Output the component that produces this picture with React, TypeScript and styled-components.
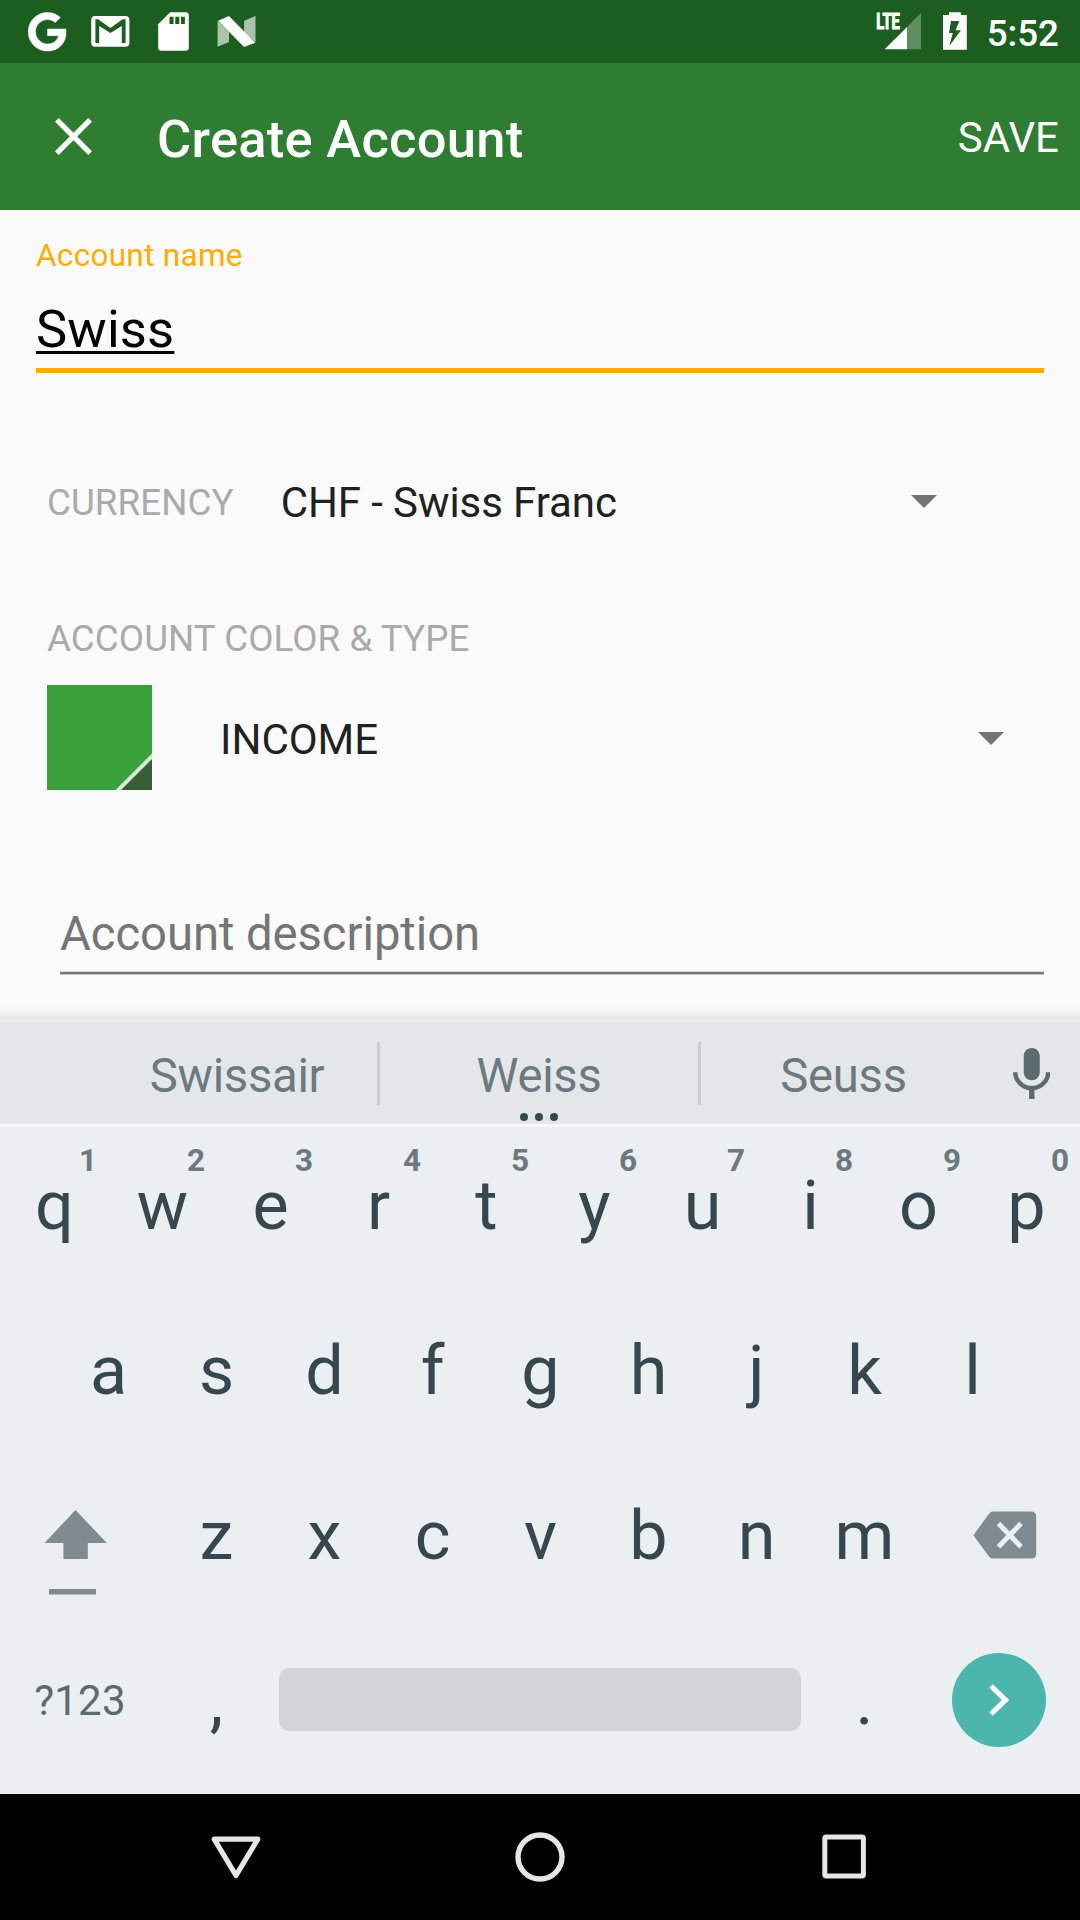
import React from "react";
import styled, { createGlobalStyle } from "styled-components";

const GlobalStyle = createGlobalStyle`
  * { box-sizing: border-box; }
  body { margin: 0; background: #fafafa; }
  svg { display: block; flex: none; }
`;

const Screen = styled.div`
  width: 1080px;
  height: 1920px;
  display: flex;
  flex-direction: column;
  overflow: hidden;
  background: #fafafa;
  font-family: Roboto, "Liberation Sans", sans-serif;
`;

const StatusBar = styled.div`
  height: 63px;
  display: flex;
  justify-content: space-between;
  padding: 0 21px 0 28px;
  background: #1b5e20;
`;

const StatusGroup = styled.div<{ $gap: number }>`
  display: flex;
  align-items: center;
  gap: ${(p) => p.$gap}px;
`;

const Clock = styled.span`
  color: #fff;
  font-size: 36.75px;
  font-weight: 500;
  line-height: 44px;
  padding-top: 4px;
`;

const AppBar = styled.header`
  height: 147px;
  display: flex;
  align-items: center;
  padding: 0 21px 0 55px;
  background: #2e7d32;
  color: #fff;
`;

const Title = styled.h1`
  flex: 1;
  margin: 0 0 0 65px;
  padding-top: 4px;
  font-size: 52.5px;
  font-weight: 500;
  letter-spacing: 0.27px;
  line-height: 62px;
`;

const SaveButton = styled.button`
  border: 0;
  padding: 2px 0 0;
  background: none;
  color: #fff;
  font: 400 42px / 50px Roboto, sans-serif;
`;

const Form = styled.main`
  flex: none;
  height: 809px;
  display: flex;
  flex-direction: column;
  padding: 26px 36px 0;
`;

const FloatingLabel = styled.label`
  color: #ffab00;
  font-size: 31.5px;
  letter-spacing: 0.3px;
  line-height: 40px;
`;

const NameField = styled.div`
  margin-top: 23px;
  height: 74px;
  border-bottom: 5px solid #ffab00;
  color: #000;
  font-size: 52.5px;
  letter-spacing: 0.15px;
  line-height: 60px;
`;

const Composing = styled.span`
  text-decoration: underline;
  text-decoration-thickness: 3px;
  text-decoration-skip-ink: none;
  text-underline-offset: 4px;
`;

const CurrencyRow = styled.div`
  margin: 99px 107px 0 11px;
  height: 60px;
  display: flex;
  align-items: center;
`;

const Caption = styled.span`
  color: #aaa;
  font-size: 36.75px;
  letter-spacing: 0.06px;
  line-height: 40px;
  padding-top: 2px;
`;

const SectionCaption = styled(Caption)`
  margin: 85px 0 0 11px;
`;

const Choice = styled.span<{ $inset: number; $tracking?: number }>`
  flex: 1;
  margin-left: ${(p) => p.$inset}px;
  padding-top: 2px;
  color: #212121;
  font-size: 42px;
  letter-spacing: ${(p) => p.$tracking ?? 0}px;
  line-height: 50px;
`;

const TypeRow = styled.div`
  margin: 26px 40px 0 11px;
  height: 105px;
  display: flex;
  align-items: center;
`;

const TypeSpinner = styled.div`
  flex: 1;
  display: flex;
  align-items: center;
  padding-top: 2px;
`;

const DescriptionField = styled.div`
  margin: 114px 0 0 24px;
  color: #757575;
  font-size: 47.25px;
  letter-spacing: -0.07px;
  line-height: 60px;
`;

const DescriptionRule = styled.div`
  margin: 7px 0 0 24px;
  height: 4px;
  background: linear-gradient(#dcdcdc 0 1px, #757575 1px 3px, #c4c4c4 3px);
`;

const KeyboardShadow = styled.div`
  margin: auto -36px 0;
  height: 13px;
  background: linear-gradient(#fafafa, #e8e8e8);
`;

const Suggestions = styled.div`
  height: 108px;
  display: flex;
  align-items: center;
  padding: 0 29px 0 97px;
  border-top: 3px solid #eceff1;
  border-bottom: 3px solid #f5f7f8;
  background: #e3e7e9;
`;

const Suggestion = styled.div<{ $width: number }>`
  position: relative;
  width: ${(p) => p.$width}px;
  padding-top: 5px;
  text-align: center;
  color: #6d797f;
  font-size: 47.25px;
  letter-spacing: -0.3px;
  line-height: 56px;
`;

const MoreDots = styled.svg`
  position: absolute;
  left: 50%;
  bottom: -18px;
  transform: translateX(-50%);
`;

const Divider = styled.div`
  width: 3px;
  height: 63px;
  background: #c9ced1;
`;

const MicSlot = styled.div`
  margin-left: auto;
  width: 39px;
  display: flex;
  justify-content: center;
`;

const Keyboard = styled.div`
  height: 667px;
  background: #eceff1;
`;

const KeyRow = styled.div<{ $height?: number; $inset?: number; $lift?: number }>`
  height: ${(p) => p.$height ?? 165}px;
  padding: 0 ${(p) => p.$inset ?? 0}px ${(p) => p.$lift ?? 0}px;
  display: flex;
`;

const Key = styled.div<{ $width?: number }>`
  position: relative;
  width: ${(p) => p.$width ?? 108}px;
  padding-left: 1px;
  display: flex;
  align-items: center;
  justify-content: center;
  color: #37474f;
  font-size: 68.25px;
  line-height: 80px;
`;

const ShiftKey = styled(Key)`
  align-items: flex-start;
  justify-content: flex-start;
  padding: 57px 0 0 44px;
`;

const DeleteKey = styled(Key)`
  justify-content: flex-end;
  padding: 0 43px 2px 0;
`;

const EnterKey = styled(Key)`
  padding: 0 0 1px;
`;

const Hint = styled.span`
  position: absolute;
  top: 15px;
  right: 11px;
  color: #6d797f;
  font-size: 31.5px;
  font-weight: 700;
  line-height: 38px;
`;

const SymbolKey = styled(Key)`
  padding: 0 2px 0 0;
  color: #5b6a71;
  font-size: 42px;
  letter-spacing: 0.25px;
`;

const SpaceKey = styled.div`
  width: 522px;
  height: 63px;
  margin: 50px 9px 0;
  border-radius: 10px;
  background: #d1d5d8;
`;

const EnterButton = styled.div`
  width: 94px;
  height: 94px;
  border-radius: 50%;
  background: #4db6ac;
  display: flex;
  align-items: center;
  justify-content: center;
`;

const NavBar = styled.nav`
  height: 126px;
  display: flex;
  justify-content: space-between;
  align-items: center;
  padding: 0 214px 0 211px;
  background: #000;
`;

const HomeIcon = styled.svg`
  margin-right: 3px;
`;

const Caret = () => (
  <svg width="26" height="14" viewBox="0 0 26 14">
    <path d="M0 0H26L13 13Z" fill="#737373" />
  </svg>
);

const digits = "1234567890";

export default function App() {
  return (
    <>
      <GlobalStyle />
      <Screen>
        <StatusBar>
          <StatusGroup $gap={0}>
            <svg width="228" height="63" viewBox="28 0 228 63">
              <g transform="translate(28.2 11.9) scale(.0777)">
                <path
                  fill="#fff"
                  stroke="#fff"
                  strokeWidth="6"
                  d="M488 261.8C488 403.3 391.1 504 248 504 110.8 504 0 393.2 0 256S110.8 8 248 8c66.8 0 123 24.5 166.3 64.9l-67.5 64.9C258.5 52.6 94.3 116.6 94.3 256c0 86.5 69.1 156.6 153.7 156.6 98.2 0 135-70.4 140.8-106.9H248v-85.3h236.1c2.3 12.7 3.9 24.9 3.9 41.4z"
                />
              </g>
              <g transform="translate(91.2 16)">
                <rect width="38.2" height="30.7" rx="4" fill="#fff" />
                <path d="M4.2 27V3.3H7L19.2 12 31.4 3.3H34.4V27H30.6V10L19.2 17 8 10V27Z" fill="#1b5e20" />
              </g>
              <g transform="translate(158 12.2)">
                <path d="M12.2 0H27.5Q30.8 0 30.8 3.3V35.2Q30.8 38.5 27.5 38.5H3.5Q.2 38.5 .2 35.2V12Z" fill="#fff" />
                <path d="M11.5 4.5h4v7.4h-4zM17.3 4.5h4v7.4h-4zM22.9 4.5h4v7.4h-4z" fill="#1b5e20" />
              </g>
              <g transform="translate(217 16)" fill="#fff">
                <path d="M.6 4.7L12 16V26L.6 30.7ZM27.1 4.7L38.5 0V26.6L27.1 16Z" opacity=".63" />
                <path d="M1 4.7L12 0 38.2 26.7 27.1 31Z" />
              </g>
            </svg>
          </StatusGroup>
          <StatusGroup $gap={19}>
            <svg width="92" height="63" viewBox="876 0 92 63">
              <text
                x="876.2"
                y="29"
                fill="#fff"
                stroke="#fff"
                strokeWidth="1.1"
                fontSize="21.8"
                fontWeight="700"
                textLength="23.6"
                lengthAdjust="spacingAndGlyphs"
              >
                LTE
              </text>
              <path d="M921 13V49.3H907V27Z" fill="#fff" opacity=".3" />
              <path d="M907 27V49.3H884.7Z" fill="#fff" />
              <path
                fillRule="evenodd"
                fill="#fff"
                d="M949 12.2H960.8V15H966.8V49.8H943V15H949ZM951 21L949 33H952.8L949.3 46 961 30.3H955.6L959.4 21Z"
              />
            </svg>
            <Clock>5:52</Clock>
          </StatusGroup>
        </StatusBar>

        <AppBar>
          <svg width="37" height="37" viewBox="5 5 14 14">
            <path fill="#fff" d="M19 6.41L17.59 5 12 10.59 6.41 5 5 6.41 10.59 12 5 17.59 6.41 19 12 13.41 17.59 19 19 17.59 13.41 12z" />
          </svg>
          <Title>Create Account</Title>
          <SaveButton>SAVE</SaveButton>
        </AppBar>

        <Form>
          <FloatingLabel>Account name</FloatingLabel>
          <NameField>
            <Composing>Swiss</Composing>
          </NameField>
          <CurrencyRow>
            <Caption>CURRENCY</Caption>
            <Choice $inset={47} $tracking={-0.08}>CHF - Swiss Franc</Choice>
            <Caret />
          </CurrencyRow>
          <SectionCaption>ACCOUNT COLOR &amp; TYPE</SectionCaption>
          <TypeRow>
            <svg width="105" height="105" viewBox="0 0 105 105">
              <path d="M0 0H105V105H0Z" fill="#3aa039" />
              <path d="M105 68.5V105H68.5Z" fill="#d8ebd8" />
              <path d="M105 74V105H74Z" fill="#365f37" />
            </svg>
            <TypeSpinner>
              <Choice $inset={68}>INCOME</Choice>
              <Caret />
            </TypeSpinner>
          </TypeRow>
          <DescriptionField>Account description</DescriptionField>
          <DescriptionRule />
          <KeyboardShadow />
        </Form>

        <Suggestions>
          <Suggestion $width={280}>Swissair</Suggestion>
          <Divider />
          <Suggestion $width={318}>
            Weiss
            <MoreDots width="40" height="10" viewBox="0 0 40 10">
              <g fill="#37474f">
                <circle cx="5" cy="5" r="4" />
                <circle cx="20" cy="5" r="4" />
                <circle cx="35" cy="5" r="4" />
              </g>
            </MoreDots>
          </Suggestion>
          <Divider />
          <Suggestion $width={285}>Seuss</Suggestion>
          <MicSlot>
            <svg width="37.5" height="51" viewBox="5 2 14 19">
              <path
                fill="#5c6a71"
                d="M12 14c1.66 0 2.99-1.34 2.99-3L15 5c0-1.66-1.34-3-3-3S9 3.34 9 5v6c0 1.66 1.34 3 3 3zm5.3-3c0 3-2.54 5.1-5.3 5.1S6.7 14 6.7 11H5c0 3.41 2.72 6.23 6 6.72V21h2v-3.28c3.28-.48 6-3.3 6-6.72h-1.7z"
              />
            </svg>
          </MicSlot>
        </Suggestions>

        <Keyboard>
          <KeyRow $height={161} $lift={3}>
            {[..."qwertyuiop"].map((letter, i) => (
              <Key key={letter}>
                {letter}
                <Hint>{digits[i]}</Hint>
              </Key>
            ))}
          </KeyRow>
          <KeyRow $inset={54}>
            {[..."asdfghjkl"].map((letter) => (
              <Key key={letter}>{letter}</Key>
            ))}
          </KeyRow>
          <KeyRow>
            <ShiftKey $width={162}>
              <svg width="64" height="86" viewBox="0 0 64 86">
                <path d="M31.5 0L62.8 33H43.8V49H19.4V33H.5Z" fill="#7f8b90" />
                <path d="M5 79H52V84.6H5Z" fill="#7f8b90" />
              </svg>
            </ShiftKey>
            {[..."zxcvbnm"].map((letter) => (
              <Key key={letter}>{letter}</Key>
            ))}
            <DeleteKey $width={162}>
              <svg width="64" height="48" viewBox="0 0 64 48">
                <path d="M20 .6H58Q63.2 .6 63.2 5.8V42.4Q63.2 47.6 58 47.6H20Q17.6 47.6 16 45.4L.4 24.2 16 2.8Q17.6 .6 20 .6Z" fill="#7f8b90" />
                <path d="M25.5 12.5L48 35.7M48 12.5L25.5 35.7" stroke="#eceff1" strokeWidth="5" />
              </svg>
            </DeleteKey>
          </KeyRow>
          <KeyRow>
            <SymbolKey $width={162}>?123</SymbolKey>
            <Key>,</Key>
            <SpaceKey />
            <Key>.</Key>
            <EnterKey $width={162}>
              <EnterButton>
                <svg width="20" height="32" viewBox="0 0 20 32">
                  <path d="M2 2L16.4 16 2 30" fill="none" stroke="#fff" strokeWidth="5.2" />
                </svg>
              </EnterButton>
            </EnterKey>
          </KeyRow>
        </Keyboard>

        <NavBar>
          <svg width="50" height="50" viewBox="0 0 50 50">
            <path d="M3.2 7.2H46.8L25 43.5Z" fill="none" stroke="#e6e6e6" strokeWidth="5.2" strokeLinejoin="round" />
          </svg>
          <HomeIcon width="50" height="50" viewBox="0 0 50 50">
            <circle cx="25" cy="25" r="22" fill="none" stroke="#e6e6e6" strokeWidth="5.4" />
          </HomeIcon>
          <svg width="44" height="46" viewBox="0 0 44 46">
            <rect x="2.8" y="3" width="38.6" height="39" rx="1.5" fill="none" stroke="#e6e6e6" strokeWidth="5" />
          </svg>
        </NavBar>
      </Screen>
    </>
  );
}
